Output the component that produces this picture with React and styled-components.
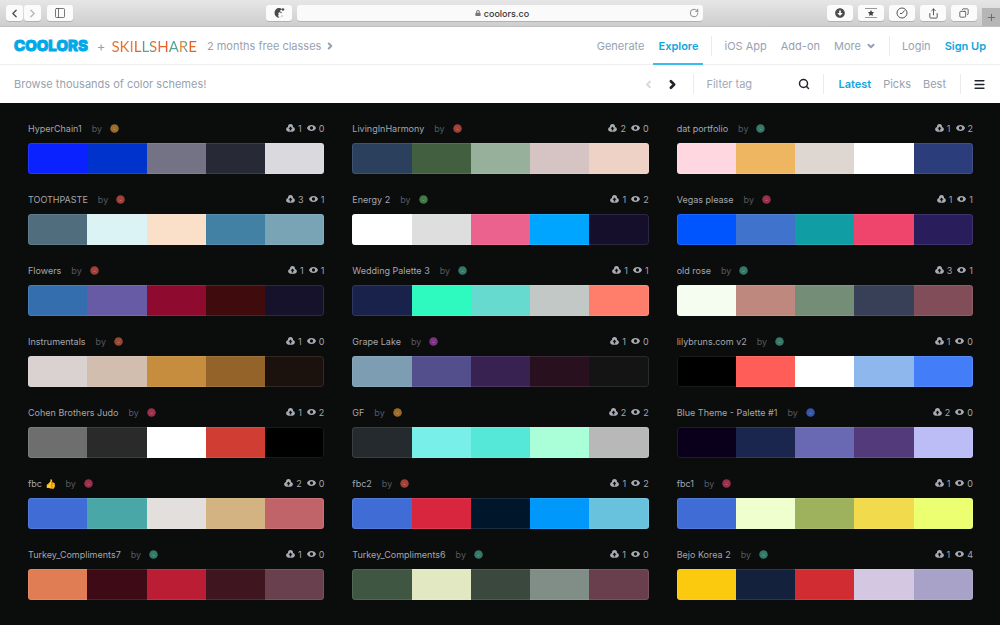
import styled, { createGlobalStyle } from 'styled-components';
import {
  ChevronLeft,
  ChevronRight,
  ChevronDown,
  Search,
  Menu,
  Share,
  Copy,
  PanelLeft,
  RotateCw,
  Plus,
} from 'lucide-react';
import { FaLock, FaArrowAltCircleDown, FaStar } from 'react-icons/fa';

const GlobalStyle = createGlobalStyle`
* {
  box-sizing: border-box;
}
body {
  margin: 0;
  background-color: #0b0c0c;
  font-family: Inter, 'Open Sans', sans-serif;
}
button, input {
  font: inherit;
  border: none;
  padding: 0;
  margin: 0;
  background: none;
}
a {
  color: inherit;
  text-decoration: none;
}
svg {
  display: block;
  flex: none;
}
`;
const Page = styled.div`
min-height: 100vh;
`;
const Toolbar = styled.div`
display: grid;
grid-template-columns: 266fr 437fr 297fr;
height: 27px;
background: linear-gradient(#e6e6e6, #cecece);
border-bottom: 1px solid #c0c0c0;
`;
const ToolGroup = styled.div`
display: flex;
align-items: center;
justify-content: ${p => (p.$end ? 'flex-end' : 'flex-start')};
gap: ${p => (p.$end ? '5px' : '6px')};
padding-left: ${p => (p.$end ? '0' : '6px')};
`;
const Joined = styled.div`
display: flex;
gap: 1px;
`;
const ToolButton = styled.button`
display: flex;
align-items: center;
justify-content: center;
width: ${p => p.$width || 26}px;
height: 16px;
border-radius: 3px;
background-color: #fbfbfb;
box-shadow: 0 1px 0 rgba(0, 0, 0, 0.15);
color: ${p => (p.$muted ? '#b5b5b5' : '#4c4c4c')};
`;
const AddTab = styled.button`
display: flex;
align-items: center;
justify-content: center;
align-self: flex-end;
width: 18px;
height: 18px;
background-color: #b6b6b6;
color: #666;
`;
const AddressArea = styled.div`
display: flex;
align-items: center;
gap: 5px;
`;
const Address = styled.div`
display: flex;
align-items: center;
flex: 1;
height: 16px;
padding: 0 4px;
border-radius: 3px;
background-color: #fafafa;
box-shadow: 0 1px 0 rgba(0, 0, 0, 0.15);
color: #777;
`;
const Site = styled.span`
display: flex;
align-items: center;
justify-content: center;
flex: 1;
gap: 3px;
padding-left: 14px;
font-size: 9px;
font-weight: 500;
color: #333;
`;
const Bar = styled.header`
display: flex;
align-items: center;
justify-content: space-between;
height: 38px;
padding: 0 14px;
background-color: #fff;
border-bottom: ${p => (p.$line ? '1px solid #eee' : 'none')};
font-size: 11px;
color: #98a2b0;
`;
const Brand = styled.div`
display: flex;
align-items: center;
`;
const Logo = styled.a`
font-size: 15px;
font-weight: 800;
line-height: 20px;
color: #00a8e8;
-webkit-text-stroke: 1px #00a8e8;
`;
const And = styled.span`
margin: 0 6px 0 9px;
font-size: 13px;
`;
const Skillshare = styled.a`
font-family: Lato, sans-serif;
font-size: 15px;
line-height: 20px;
color: transparent;
background: linear-gradient(
  90deg,
  #e5702e 0 20%,
  #d98a3a 24%,
  #e5602b 28% 34%,
  #4fa79b 38% 46%,
  #e5702e 48% 57%,
  #e5602b 58% 66%,
  #4fa79b 70% 76%,
  #e08a3a 80% 84%,
  #4fa79b 88%,
  #e5602b 92%
);
background-clip: text;
`;
const Promo = styled.a`
display: flex;
align-items: center;
gap: 4px;
margin-left: 10px;
`;
const Nav = styled.nav`
display: flex;
align-items: center;
align-self: stretch;
gap: ${p => p.$gap || 4}px;
`;
const TopNav = styled(Nav)`
margin-right: -5px;
`;
const NavLink = styled.a`
display: flex;
align-items: center;
gap: 5px;
height: 38px;
padding: 0 5px;
font-weight: ${p => (p.$strong ? 600 : 400)};
color: ${p => (p.$strong ? '#0fa5de' : 'inherit')};
border-top: 2px solid transparent;
border-bottom: 2px solid ${p => (p.$active ? '#39bdea' : 'transparent')};
`;
const Divider = styled.span`
width: 1px;
height: 20px;
margin-left: ${p => p.$left || 4}px;
margin-right: ${p => p.$right || 4}px;
background-color: #e9ebee;
`;
const IconButton = styled.button`
display: flex;
color: ${p => (p.$muted ? '#d8dce0' : '#20242c')};
`;
const FilterForm = styled.form`
display: flex;
align-items: center;
width: 104px;
`;
const FilterInput = styled.input`
flex: 1;
min-width: 0;
outline: none;
&::placeholder {
  color: #a0a8b4;
  opacity: 1;
}
`;
const Grid = styled.main`
display: grid;
grid-template-columns: repeat(3, 1fr);
gap: 16px 28px;
padding: 16px 27px 25px 28px;
`;
const Card = styled.article`
height: 55px;
`;
const CardHead = styled.div`
display: flex;
align-items: center;
height: 18px;
margin-bottom: 6px;
font-size: 9px;
color: #a4a7ad;
`;
const Name = styled.a`
white-space: pre;
`;
const By = styled.span`
margin: 0 8px 0 10px;
color: #565a60;
`;
const Stats = styled.div`
display: flex;
align-items: center;
gap: 3px;
margin-left: auto;
`;
const Count = styled.span`
&:not(:last-child) {
  margin-right: 2px;
}
`;
const Swatches = styled.div`
display: flex;
height: 31px;
border-radius: 3px;
overflow: hidden;
position: relative;
&::after {
  content: '';
  position: absolute;
  inset: 0;
  border: 1px solid rgba(255, 255, 255, 0.1);
  border-radius: 3px;
}
`;
const Swatch = styled.span`
flex: 1;
background-color: ${p => p.$color};
`;

const tones = {
  gold: '#9a6c2c',
  red: '#a04038',
  rose: '#98304a',
  green: '#3f7844',
  teal: '#347868',
  rust: '#984830',
  purple: '#803080',
  blue: '#3456a8',
};

const palettes = [
  ['HyperChain1', 'gold', 1, 0, '#0a22ff #0033cc #737385 #282936 #d9d9de'],
  ['LivingInHarmony', 'red', 2, 0, '#2b405d #426040 #97b09c #d6c4c4 #eed2c5'],
  ['dat portfolio', 'teal', 1, 2, '#ffd7e1 #efb661 #ded6d0 #ffffff #2b3d7a'],
  ['TOOTHPASTE', 'red', 3, 1, '#506d7d #dbf3f4 #fadfc9 #4280a4 #78a4b6'],
  ['Energy 2', 'green', 1, 2, '#ffffff #dedede #eb628f #00a5ff #150f2b'],
  ['Vegas please', 'rose', 1, 1, '#0055ff #4073cc #119da4 #ef446b #2a1d5c'],
  ['Flowers', 'red', 1, 1, '#346eae #665ba4 #8e0a2f #400b0d #16122b'],
  ['Wedding Palette 3', 'teal', 1, 1, '#18224b #2efabf #66dace #c2c8c6 #ff7e6b'],
  ['old rose', 'teal', 3, 1, '#f5fcf0 #bf887e #738d77 #384058 #804d58'],
  ['Instrumentals', 'rust', 1, 0, '#dad1d1 #d2beae #c58d3d #946329 #1b110d'],
  ['Grape Lake', 'purple', 1, 0, '#7c9db2 #534f8c #382251 #28101f #141414'],
  ['lilybruns.com v2', 'teal', 1, 0, '#000000 #ff5d58 #ffffff #8eb8ed #447df8'],
  ['Cohen Brothers Judo', 'rose', 1, 2, '#6e6e6e #2a2a2a #ffffff #d03d33 #000000'],
  ['GF', 'gold', 2, 2, '#242a2d #78efe8 #55e7d8 #aaffd9 #b8b8b8'],
  ['Blue Theme - Palette #1', 'blue', 2, 0, '#0a001b #1b264f #6969b3 #533a7b #bcbcf7'],
  ['fbc 👍', 'rose', 2, 0, '#3f6dd5 #49a8a7 #e3dfdc #d2b381 #c16469'],
  ['fbc2', 'red', 1, 2, '#3f6dd5 #d9263f #00172b #0098fa #69c2dd'],
  ['fbc1', 'rose', 1, 0, '#3f6dd5 #efffcd #9eb25d #f1da4b #ecff70'],
  ['Turkey_Compliments7', 'teal', 1, 0, '#e07d55 #3e0a16 #ba1d34 #3f1520 #69404e'],
  ['Turkey_Compliments6', 'teal', 1, 0, '#3f5642 #e2e9c2 #3b483e #808e87 #693f4d'],
  ['Bejo Korea 2', 'teal', 1, 4, '#fbc90e #14213d #d12c32 #d3c7e1 #a8a2c8'],
];

const CloudIcon = () => (
  <svg width="9" height="8" viewBox="0 0 18 16" fill="#a9adb3">
    <path d="M9 0a5 5 0 0 1 5 5v1a4.800 4.800 0 0 1-1 9.500H5A4.800 4.800 0 0 1 4 6V5a5 5 0 0 1 5-5z" />
    <path d="M9 5l4 4.500h-2.500V13h-3V9.500H5z" fill="#0b0c0c" />
  </svg>
);

const EyeIcon = () => (
  <svg width="9" height="8" viewBox="0 0 18 16" fill="#a9adb3" fillRule="evenodd">
    <path d="M9 2c4.500 0 7.500 2.500 9 6-1.500 3.500-4.500 6-9 6s-7.500-2.500-9-6c1.500-3.500 4.500-6 9-6zm0 2.700a3.300 3.300 0 1 0 0 6.600 3.300 3.300 0 0 0 0-6.600z" />
  </svg>
);

const Avatar = ({ tone }) => (
  <svg width="9" height="9" viewBox="0 0 18 18">
    <circle cx="9" cy="9" r="8.500" fill={tones[tone]} />
    <path
      d="M6.500 7.500h1M10.500 7.500h1M7 11h4"
      stroke="#fff"
      strokeOpacity="0.3"
      strokeWidth="1.500"
      fill="none"
    />
  </svg>
);

const GhostIcon = () => (
  <svg width="12" height="12" viewBox="0 0 24 24" fill="#4a4a4a">
    <path d="M3 12C3 6 7 2 12 2c3 0 5 1 6 3l-4 2c2 2 0 4-2 4-2 1-2 3 0 4l-2 1 2 6C7 21 3 17 3 12z" />
    <circle cx="20" cy="5" r="2.500" />
    <circle cx="16" cy="11" r="1.500" />
    <circle cx="18" cy="18" r="1.500" fill="#aaa" />
    <circle cx="14" cy="20" r="1" fill="#aaa" />
  </svg>
);

const TopSitesIcon = () => (
  <svg width="14" height="12" viewBox="0 0 14 12" stroke="#999">
    <path d="M1 1.500h12M1 10.500h12" />
    <FaStar x="4" y="3" size={6} color="#444" stroke="none" />
  </svg>
);

const HistoryIcon = () => (
  <svg width="12" height="12" viewBox="0 0 24 24" fill="none" stroke="#555" strokeWidth="2">
    <circle cx="12" cy="12" r="10" />
    <path d="M17 7l-5 6H8" />
  </svg>
);

const Palette = ({ name, tone, saves, views, colors }) => (
  <Card>
    <CardHead>
      <Name href="#">{name}</Name>
      <By>by</By>
      <Avatar tone={tone} />
      <Stats>
        <CloudIcon />
        <Count>{saves}</Count>
        <EyeIcon />
        <Count>{views}</Count>
      </Stats>
    </CardHead>
    <Swatches>
      {colors.map((color, i) => (
        <Swatch key={i} $color={color} />
      ))}
    </Swatches>
  </Card>
);

const App = () => {
  return (
    <Page>
      <GlobalStyle />
      <Toolbar>
        <ToolGroup>
          <Joined>
            <ToolButton $width={17} aria-label="Back">
              <ChevronLeft size={13} strokeWidth={2.5} />
            </ToolButton>
            <ToolButton $width={17} $muted aria-label="Forward">
              <ChevronRight size={13} strokeWidth={2.5} />
            </ToolButton>
          </Joined>
          <ToolButton aria-label="Sidebar">
            <PanelLeft size={12} strokeWidth={1.5} />
          </ToolButton>
        </ToolGroup>
        <AddressArea>
          <ToolButton aria-label="Ghostery">
            <GhostIcon />
          </ToolButton>
          <Address>
            <Site>
              <FaLock size={6} color="#777" />
              coolors.co
            </Site>
            <RotateCw size={10} strokeWidth={2} />
          </Address>
        </AddressArea>
        <ToolGroup $end>
          <ToolButton aria-label="Downloads">
            <FaArrowAltCircleDown size={10} />
          </ToolButton>
          <ToolButton aria-label="Top sites">
            <TopSitesIcon />
          </ToolButton>
          <ToolButton aria-label="History">
            <HistoryIcon />
          </ToolButton>
          <ToolButton aria-label="Share">
            <Share size={11} strokeWidth={2} />
          </ToolButton>
          <ToolButton aria-label="Tabs">
            <Copy size={10} strokeWidth={2} transform="scale(-1 1)" />
          </ToolButton>
          <AddTab aria-label="New tab">
            <Plus size={11} />
          </AddTab>
        </ToolGroup>
      </Toolbar>
      <Bar $line>
        <Brand>
          <Logo href="#">COOLORS</Logo>
          <And>+</And>
          <Skillshare href="#">SKILLSHARE</Skillshare>
          <Promo href="#">
            2 months free classes
            <ChevronRight size={10} strokeWidth={5} />
          </Promo>
        </Brand>
        <TopNav>
          <NavLink href="#">Generate</NavLink>
          <NavLink href="#" $strong $active>
            Explore
          </NavLink>
          <Divider $right={3} />
          <NavLink href="#">iOS App</NavLink>
          <NavLink href="#">Add-on</NavLink>
          <NavLink href="#">
            More
            <ChevronDown size={10} strokeWidth={5} />
          </NavLink>
          <Divider $right={3} />
          <NavLink href="#">Login</NavLink>
          <NavLink href="#" $strong>
            Sign Up
          </NavLink>
        </TopNav>
      </Bar>
      <Bar>
        <span>Browse thousands of color schemes!</span>
        <Nav $gap={2}>
          <Nav $gap={12}>
            <IconButton $muted aria-label="Previous page">
              <ChevronLeft size={11} strokeWidth={5} />
            </IconButton>
            <IconButton aria-label="Next page">
              <ChevronRight size={13} strokeWidth={5} />
            </IconButton>
          </Nav>
          <Divider $left={12} $right={10} />
          <FilterForm>
            <FilterInput type="text" placeholder="Filter tag" aria-label="Filter tag" />
            <IconButton type="submit" aria-label="Search">
              <Search size={12} strokeWidth={3} />
            </IconButton>
          </FilterForm>
          <Divider $left={11} $right={7} />
          <NavLink href="#" $strong>
            Latest
          </NavLink>
          <NavLink href="#">Picks</NavLink>
          <NavLink href="#">Best</NavLink>
          <Divider $left={7} $right={10} />
          <IconButton aria-label="Menu">
            <Menu size={13} strokeWidth={3} />
          </IconButton>
        </Nav>
      </Bar>
      <Grid>
        {palettes.map(([name, tone, saves, views, colors]) => (
          <Palette
            key={name}
            name={name}
            tone={tone}
            saves={saves}
            views={views}
            colors={colors.split(' ')}
          />
        ))}
      </Grid>
    </Page>
  );
};
export default App;
